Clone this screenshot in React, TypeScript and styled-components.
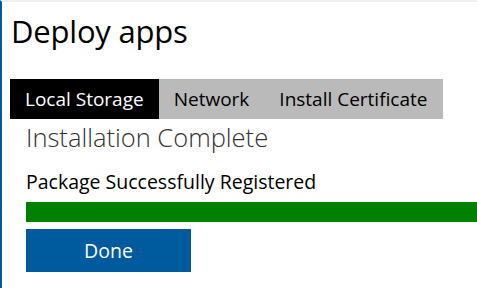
import styled, { createGlobalStyle } from "styled-components";

const GlobalStyle = createGlobalStyle`
  html, body {
    margin: 0;
    padding: 0;
    background: #ffffff;
    font-family: "Open Sans", "Noto Sans", sans-serif;
  }
`;

const Frame = styled.div`
  width: 477px;
  height: 288px;
  box-sizing: border-box;
  border-top: 2px solid #f0f0f0;
  border-left: 2px solid #005a9e;
  overflow: hidden;
  background: #ffffff;
`;

const Title = styled.h1`
  margin: 0;
  padding: 9px 0 0 9px;
  height: 67px;
  box-sizing: border-box;
  font-size: 31px;
  font-weight: 400;
  color: #000;
  line-height: 40px;
  letter-spacing: -0.2px;
`;

const Tabs = styled.div`
  display: flex;
  margin: 10px 0 0 8px;
  width: 433px;
  height: 40px;
  background: #bababa;
`;

const Tab = styled.div<{ $active?: boolean }>`
  display: flex;
  flex-shrink: 0;
  align-items: center;
  padding: 0 15px;
  white-space: nowrap;
  font-size: 19px;
  color: ${(p) => (p.$active ? "#fff" : "#000")};
  background: ${(p) => (p.$active ? "#000" : "transparent")};
`;

const Body = styled.div`
  padding-left: 24px;
`;

const Heading = styled.h2`
  margin: 2px 0 0;
  font-size: 25.5px;
  font-weight: 300;
  color: #333;
  line-height: 32px;
`;

const Status = styled.div`
  margin-top: 16px;
  font-size: 19.5px;
  line-height: 26px;
  color: #000;
`;

const Progress = styled.div`
  margin-top: 7px;
  height: 20px;
  background: #008000;
`;

const Button = styled.button`
  display: block;
  margin-top: 7px;
  width: 165px;
  height: 43px;
  border: none;
  background: #005a9e;
  color: #fff;
  font-family: inherit;
  font-size: 19.5px;
  padding: 0;
`;

export default function App() {
  return (
    <>
      <GlobalStyle />
      <Frame>
        <Title>Deploy apps</Title>
        <Tabs>
          <Tab $active>Local Storage</Tab>
          <Tab>Network</Tab>
          <Tab>Install Certificate</Tab>
        </Tabs>
        <Body>
          <Heading>Installation Complete</Heading>
          <Status>Package Successfully Registered</Status>
          <Progress />
          <Button>Done</Button>
        </Body>
      </Frame>
    </>
  );
}
